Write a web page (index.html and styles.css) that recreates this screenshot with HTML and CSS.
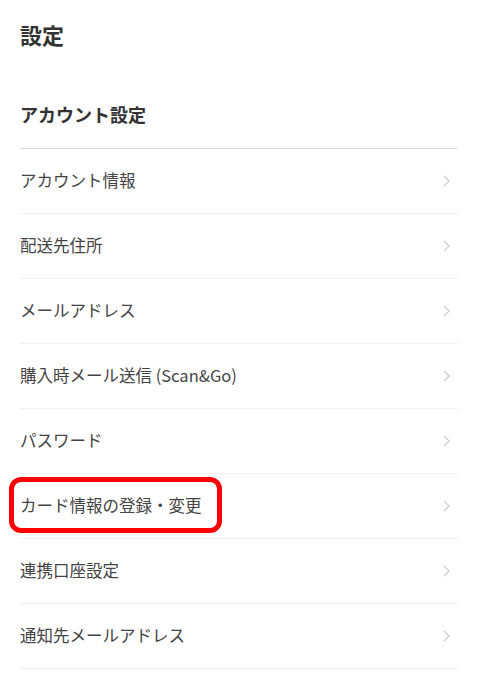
FILE: index.html
```html
<!DOCTYPE html>
<html lang="ja">
<head>
<meta charset="utf-8">
<link rel="stylesheet" href="styles.css">
</head>
<body>
<div class="page">
  <h1 class="title">設定</h1>
  <h2 class="section">アカウント設定</h2>
  <ul class="list">
    <li class="row"><span class="label">アカウント情報</span><svg class="chev" viewBox="0 0 8 14"><path d="M1 1l6 6-6 6"/></svg></li>
    <li class="row"><span class="label">配送先住所</span><svg class="chev" viewBox="0 0 8 14"><path d="M1 1l6 6-6 6"/></svg></li>
    <li class="row"><span class="label">メールアドレス</span><svg class="chev" viewBox="0 0 8 14"><path d="M1 1l6 6-6 6"/></svg></li>
    <li class="row"><span class="label">購入時メール送信 (Scan&amp;Go)</span><svg class="chev" viewBox="0 0 8 14"><path d="M1 1l6 6-6 6"/></svg></li>
    <li class="row"><span class="label">パスワード</span><svg class="chev" viewBox="0 0 8 14"><path d="M1 1l6 6-6 6"/></svg></li>
    <li class="row highlight"><span class="label">カード情報の登録・変更</span><svg class="chev" viewBox="0 0 8 14"><path d="M1 1l6 6-6 6"/></svg><span class="mark"></span></li>
    <li class="row"><span class="label">連携口座設定</span><svg class="chev" viewBox="0 0 8 14"><path d="M1 1l6 6-6 6"/></svg></li>
    <li class="row"><span class="label">通知先メールアドレス</span><svg class="chev" viewBox="0 0 8 14"><path d="M1 1l6 6-6 6"/></svg></li>
  </ul>
</div>
</body>
</html>
```

FILE: styles.css
```css
html, body {
  margin: 0;
  padding: 0;
  background: #fff;
}
body {
  font-family: "Noto Sans CJK JP", "Noto Sans", sans-serif;
  color: #333;
}
.page {
  padding: 0 20px;
}
.title {
  margin: 0;
  padding-top: 23px;
  font-size: 22px;
  line-height: 22px;
  font-weight: 700;
  color: #333;
}
.section {
  margin: 60px 0 0;
  padding-bottom: 25px;
  font-size: 18px;
  line-height: 18px;
  font-weight: 700;
  color: #333;
  border-bottom: 1px solid #d9d9d9;
}
.list {
  list-style: none;
  margin: 0;
  padding: 0;
}
.row {
  position: relative;
  display: flex;
  align-items: center;
  justify-content: space-between;
  height: 64px;
  border-bottom: 1px solid #efefef;
}
.label {
  padding-bottom: 2px;
  font-size: 16.5px;
  line-height: 20px;
  color: #444;
}
.chev {
  width: 7px;
  height: 12px;
  margin-right: 8px;
  fill: none;
  stroke: #c8c8c8;
  stroke-width: 1.4;
}
.mark {
  position: absolute;
  left: -11px;
  top: 3px;
  width: 203px;
  height: 46px;
  border: 5px solid #ff0000;
  border-radius: 12px;
}
```
